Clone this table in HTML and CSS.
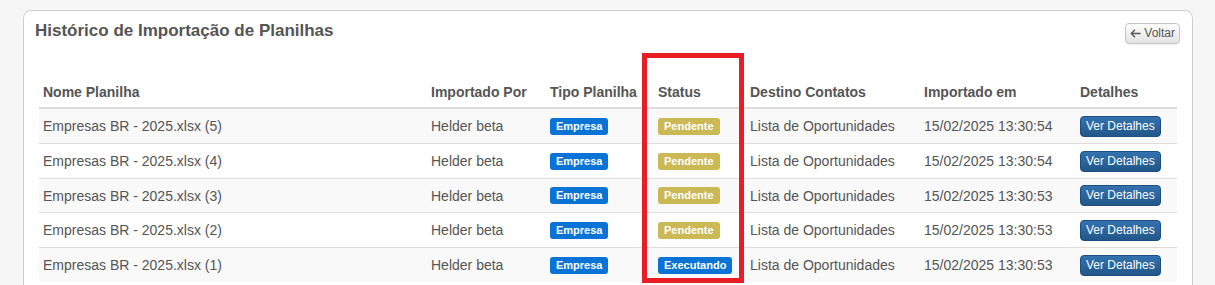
FILE: index.html
```html
<!DOCTYPE html>
<html lang="pt-BR">
<head>
<meta charset="utf-8">
<title>Histórico de Importação de Planilhas</title>
<link rel="stylesheet" href="styles.css">
</head>
<body>
<div class="annot"></div>
<div class="card">
  <div class="card-head">
    <h3 class="title">Histórico de Importação de Planilhas</h3>
    <button class="btn-back"><svg class="arrow" width="11" height="9" viewBox="0 0 11 9"><path d="M5 0.8 L1.3 4.5 L5 8.2 M1.3 4.5 H10.5" fill="none" stroke="#555" stroke-width="1.3"/></svg> Voltar</button>
  </div>
  <div class="card-body">
    <table class="grid">
      <colgroup>
        <col class="c1"><col class="c2"><col class="c3"><col class="c4"><col class="c5"><col class="c6"><col class="c7">
      </colgroup>
      <thead>
        <tr>
          <th>Nome Planilha</th>
          <th>Importado Por</th>
          <th>Tipo Planilha</th>
          <th>Status</th>
          <th>Destino Contatos</th>
          <th>Importado em</th>
          <th>Detalhes</th>
        </tr>
      </thead>
      <tbody>
        <tr>
          <td>Empresas BR - 2025.xlsx (5)</td>
          <td>Helder beta</td>
          <td><span class="badge blue">Empresa</span></td>
          <td><span class="badge gold">Pendente</span></td>
          <td>Lista de Oportunidades</td>
          <td>15/02/2025 13:30:54</td>
          <td><button class="btn-det">Ver Detalhes</button></td>
        </tr>
        <tr>
          <td>Empresas BR - 2025.xlsx (4)</td>
          <td>Helder beta</td>
          <td><span class="badge blue">Empresa</span></td>
          <td><span class="badge gold">Pendente</span></td>
          <td>Lista de Oportunidades</td>
          <td>15/02/2025 13:30:54</td>
          <td><button class="btn-det">Ver Detalhes</button></td>
        </tr>
        <tr>
          <td>Empresas BR - 2025.xlsx (3)</td>
          <td>Helder beta</td>
          <td><span class="badge blue">Empresa</span></td>
          <td><span class="badge gold">Pendente</span></td>
          <td>Lista de Oportunidades</td>
          <td>15/02/2025 13:30:53</td>
          <td><button class="btn-det">Ver Detalhes</button></td>
        </tr>
        <tr>
          <td>Empresas BR - 2025.xlsx (2)</td>
          <td>Helder beta</td>
          <td><span class="badge blue">Empresa</span></td>
          <td><span class="badge gold">Pendente</span></td>
          <td>Lista de Oportunidades</td>
          <td>15/02/2025 13:30:53</td>
          <td><button class="btn-det">Ver Detalhes</button></td>
        </tr>
        <tr>
          <td>Empresas BR - 2025.xlsx (1)</td>
          <td>Helder beta</td>
          <td><span class="badge blue">Empresa</span></td>
          <td><span class="badge blue">Executando</span></td>
          <td>Lista de Oportunidades</td>
          <td>15/02/2025 13:30:53</td>
          <td><button class="btn-det">Ver Detalhes</button></td>
        </tr>
      </tbody>
    </table>
  </div>
</div>
</body>
</html>
```
FILE: styles.css
```css
html, body {
  margin: 0;
  padding: 0;
}
body {
  background: #f6f6f6;
  font-family: "Liberation Sans", Arial, sans-serif;
  font-size: 14px;
  color: #555;
  padding: 10px 22px 0 23px;
  position: relative;
  overflow: hidden;
  height: 275px;
}
.card {
  background: #fff;
  border: 1px solid #cfcfcf;
  border-radius: 8px;
  min-height: 300px;
}
.card-head {
  display: flex;
  justify-content: space-between;
  align-items: flex-start;
  padding: 10px 12px 0 11px;
}
.title {
  margin: 0;
  font-size: 17px;
  line-height: 20px;
  font-weight: bold;
  color: #555;
}
.btn-back {
  margin-top: 2px;
  height: 21px;
  padding: 0 4px;
  font-family: "Liberation Sans", Arial, sans-serif;
  font-size: 12px;
  line-height: 19px;
  color: #555;
  background: linear-gradient(#ffffff, #e2e2e2);
  border: 1px solid #c6c6c6;
  border-radius: 4px;
  box-shadow: inset 0 1px 0 rgba(255,255,255,.2), 0 1px 1px rgba(0,0,0,.06);
  display: inline-flex;
  align-items: center;
  gap: 3px;
}
.arrow {
  display: block;
}
.card-body {
  padding: 30px 14px 0 15px;
}
.grid {
  width: 1138px;
  table-layout: fixed;
  border-collapse: collapse;
  border-spacing: 0;
}
.c1 { width: 388px; }
.c2 { width: 119px; }
.c3 { width: 108px; }
.c4 { width: 92px; }
.c5 { width: 174px; }
.c6 { width: 156px; }
.c7 { width: 101px; }
.grid th {
  text-align: left;
  font-weight: bold;
  padding: 8px 4px 5px;
  line-height: 20px;
  border-bottom: 2px solid #ddd;
  white-space: nowrap;
  color: #555;
}
.grid td {
  padding: 7px 4px 5px;
  line-height: 21.75px;
  border-top: 1px solid #ddd;
  vertical-align: middle;
  white-space: nowrap;
}
.grid tbody tr:first-child td {
  border-top: 0;
}
.grid tbody tr:nth-child(odd) td {
  background: #f9f9f9;
}
.badge {
  display: inline-block;
  font-size: 11px;
  font-weight: bold;
  line-height: 12px;
  padding: 2px 6px 3px;
  color: #fff;
  border-radius: 3px;
  vertical-align: middle;
  position: relative;
  top: -1px;
}
.blue { background: #0a74d6; }
.gold { background: #cbb955; }
.btn-det {
  height: 21px;
  padding: 0 5px;
  font-family: "Liberation Sans", Arial, sans-serif;
  font-size: 12px;
  line-height: 19px;
  color: #fff;
  background: linear-gradient(#3472af, #215789);
  border: 1px solid #1d4e7d;
  border-radius: 4px;
  vertical-align: middle;
  position: relative;
  top: -1px;
}
.annot {
  position: absolute;
  left: 642px;
  top: 53px;
  width: 92px;
  height: 220px;
  border: 5px solid #e91d25;
  z-index: 5;
}
```
